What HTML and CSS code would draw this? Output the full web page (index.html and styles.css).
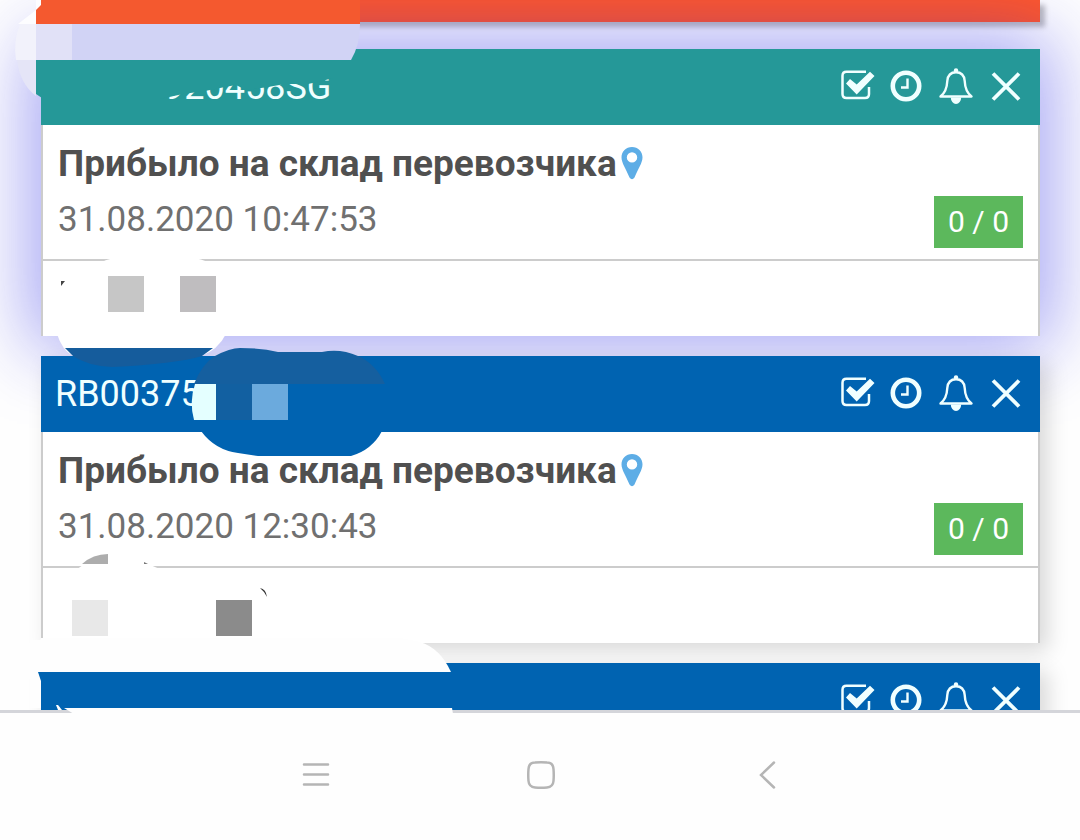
FILE: index.html
```html
<!DOCTYPE html>
<html lang="ru">
<head>
    <meta charset="UTF-8">
    <meta name="viewport" content="width=device-width, initial-scale=1">
    <title>Посылки</title>

    <link rel="stylesheet" href="styles.css">
</head>
<body>

<svg class="sprite" aria-hidden="true">
    <symbol id="check" viewBox="0 0 50 50">
        <path d="M35 9.8H15.5q-4 0-4 4V32q0 4 4 4H34q4 0 4-4V25" fill="none" stroke="currentColor" stroke-width="2.5"/>
        <path d="M15 21.5L19 17L25.7 22.5L39 9.7L43.5 14L25.7 32.5Z" fill="currentColor"/>
    </symbol>
    <symbol id="clock" viewBox="0 0 50 50">
        <circle cx="25" cy="24" r="13.2" fill="none" stroke="currentColor" stroke-width="4.6"/>
        <path d="M26.5 16.5V25.5H20" fill="none" stroke="currentColor" stroke-width="2.4"/>
    </symbol>
    <symbol id="bell" viewBox="0 0 50 50">
        <path d="M9.5 34.5C14.5 30.5 16 26 16.3 19C16.8 13.5 20 10.3 25 10.3S33.2 13.5 33.7 19C34 26 35.5 30.5 40.5 34.5Z" fill="none" stroke="currentColor" stroke-width="2.4" stroke-linejoin="round"/>
        <circle cx="25" cy="8.5" r="2.2" fill="currentColor"/>
        <path d="M19.8 35.5a5.2 6.5 0 0 0 10.4 0z" fill="currentColor"/>
    </symbol>
    <symbol id="close" viewBox="0 0 50 50">
        <path d="M12 11.5L38 37.5M38 11.5L12 37.5" fill="none" stroke="currentColor" stroke-width="3.8"/>
    </symbol>
    <symbol id="pin" viewBox="0 0 22 34">
        <path d="M11 1C5 1 .5 5.5.5 11.3C.5 17 5 23 8.5 31.5Q11 35 13.5 31.5C17 23 21.5 17 21.5 11.3C21.5 5.5 17 1 11 1ZM11 6.2a5.2 5.2 0 1 1 0 10.4a5.2 5.2 0 1 1 0-10.4Z" fill="currentColor" fill-rule="evenodd"/>
    </symbol>
</svg>

<main class="feed">

    <div class="card-tail"></div>

    <article class="card card-active">
        <header class="card-head teal">
            <h2 class="track track-short">920458SG</h2>
            <div class="actions">
                <button type="button" aria-label="Получено"><svg><use href="#check"/></svg></button>
                <button type="button" aria-label="История"><svg><use href="#clock"/></svg></button>
                <button type="button" aria-label="Уведомления"><svg><use href="#bell"/></svg></button>
                <button type="button" aria-label="Удалить"><svg><use href="#close"/></svg></button>
            </div>
        </header>
        <div class="card-body">
            <div class="status">
                <div>
                    <h3>Прибыло на склад перевозчика<svg class="pin"><use href="#pin"/></svg></h3>
                    <time datetime="2020-08-31T10:47:53">31.08.2020 10:47:53</time>
                </div>
                <span class="days">0 / 0</span>
            </div>
            <div class="note"></div>
        </div>
    </article>

    <article class="card">
        <header class="card-head blue">
            <h2 class="track">RB00375</h2>
            <div class="actions">
                <button type="button" aria-label="Получено"><svg><use href="#check"/></svg></button>
                <button type="button" aria-label="История"><svg><use href="#clock"/></svg></button>
                <button type="button" aria-label="Уведомления"><svg><use href="#bell"/></svg></button>
                <button type="button" aria-label="Удалить"><svg><use href="#close"/></svg></button>
            </div>
        </header>
        <div class="card-body">
            <div class="status">
                <div>
                    <h3>Прибыло на склад перевозчика<svg class="pin"><use href="#pin"/></svg></h3>
                    <time datetime="2020-08-31T12:30:43">31.08.2020 12:30:43</time>
                </div>
                <span class="days">0 / 0</span>
            </div>
            <div class="note"></div>
        </div>
    </article>

    <article class="card">
        <header class="card-head blue">
            <div class="actions">
                <button type="button" aria-label="Получено"><svg><use href="#check"/></svg></button>
                <button type="button" aria-label="История"><svg><use href="#clock"/></svg></button>
                <button type="button" aria-label="Уведомления"><svg><use href="#bell"/></svg></button>
                <button type="button" aria-label="Удалить"><svg><use href="#close"/></svg></button>
            </div>
        </header>
    </article>

</main>

<!-- brush strokes that hide the private numbers -->
<svg class="strokes" width="480" height="720" viewBox="0 0 480 720" aria-hidden="true">
    <!-- top card -->
    <path d="M41 0V5L36 10L18 24H36V0Z" fill="#fdfdff"/>
    <path d="M41 0V5L36 10V24H360V0Z" fill="#f4592f"/>
    <path d="M20 24Q13 42 16 60H36V24Z" fill="#f2f2fb"/>
    <path d="M36 24H72V60H36Z" fill="#e1e1f7"/>
    <path d="M72 24H360Q360 45 351 60H72Z" fill="#d1d3f5"/>
    <path d="M17 60Q20 84 36 96V60Z" fill="#e5e5f7"/>
    <path d="M36 60H42V98L36 94Z" fill="#259898"/>
    <path d="M160 70H333V78L322 81L308 84L285 84L268 87L246 90L236 85L225 87L205 91L183 94L160 99Z" fill="#259898"/>

    <!-- note of the active card -->
    <path d="M102 262Q115 255 155 255T210 263Z" fill="#fff"/>
    <path d="M61 281H65L61 286Z" fill="#444"/>
    <path d="M108 276h36v36h-36z" fill="#c6c6c6"/>
    <path d="M180 276h36v36h-36z" fill="#bfbdbf"/>
    <path d="M57 334Q62 350 73 356H201Q218 350 226 334Z" fill="#fff"/>
    <path d="M65 348L73 356Q88 366 112 367Q175 364 202 356L213 348Z" fill="#155c9c"/>

    <!-- number of the second card -->
    <path d="M194 384Q202 364 215 356Q230 348 240 348Q262 348 278 352H322Q340 348 358 356Q376 364 385 384Z" fill="#155f9f"/>
    <path d="M195 384H216V420H194Q189 402 195 384Z" fill="#e4ffff"/>
    <path d="M216 384h36v36h-36z" fill="#1260a1"/>
    <path d="M252 384h36v36h-36z" fill="#6baadd"/>
    <path d="M201 431Q215 450 238 453L258 456H351Q372 450 382 431Z" fill="#0063b1"/>

    <!-- note of the second card -->
    <path d="M76 570Q88 560 110 558T162 570Z" fill="#fff"/>
    <path d="M82 564Q93 554 108 554V564Z" fill="#adadad"/>
    <path d="M144 562L148 564H144Z" fill="#777"/>
    <path d="M260 588Q266 589 267 597Q265 592 260 588Z" fill="#333"/>
    <path d="M72 600h36v36h-36z" fill="#e8e8e8"/>
    <path d="M216 600h36v36h-36z" fill="#8b8b8b"/>
    <path d="M44 638H41L36 658V672H451Q440 648 420 642L400 638Z" fill="#fefefe"/>

    <!-- last card -->
    <path d="M30 640H41V708H30Z" fill="#fefefe"/>
    <path d="M38 672H42V684Z" fill="#0063b1"/>
    <path d="M56 705H58L62 710H58Z" fill="#fff"/>
    <path d="M64 708H452L453 714H74Z" fill="#fefefe"/>
</svg>

<nav class="system-bar">
    <button type="button" aria-label="Меню">
        <svg viewBox="0 0 40 40"><path d="M9 9.5H33M9 19.5H33M9 29.5H33"/></svg>
    </button>
    <button type="button" aria-label="Домой">
        <svg viewBox="0 0 40 40"><path d="M14 7.5Q20 7 26 7.5Q32 7.5 32.5 14Q33 20 32.5 26Q32 32 26 32.5Q20 33 14 32.5Q8 32 7.5 26Q7 20 7.5 14Q8 7.5 14 7.5Z"/></svg>
    </button>
    <button type="button" aria-label="Назад">
        <svg viewBox="0 0 40 40"><path d="M27 7.5L14 20L27 32.5"/></svg>
    </button>
</nav>

</body>
</html>
```
FILE: styles.css
```css
* {
    box-sizing: border-box;
    margin: 0;
    padding: 0;
}

body {
    display: flex;
    flex-direction: column;
    height: 100vh;
    position: relative;
    overflow: hidden;
    background: #fefefe;
    color: #505050;
    font-family: Roboto, "Liberation Sans", sans-serif;
}

button {
    border: 0;
    background: none;
    color: inherit;
    cursor: pointer;
}

.sprite {
    display: none;
}

.feed {
    flex: 1;
    min-height: 0;
    overflow: hidden;
    padding: 0 40px 0 41px;
}

.card-tail {
    height: 22px;
    margin-bottom: 27px;
    background: #ff572a;
    box-shadow: 5px 5px 5px rgba(0, 0, 0, 0.25);
}

.card {
    margin-bottom: 20px;
    box-shadow: 8px 8px 20px rgba(0, 0, 0, 0.15);
}

.card-active {
    box-shadow: 0 0 70px 12px rgba(30, 30, 230, 0.4);
}

.card-head {
    display: flex;
    align-items: center;
    height: 76px;
    padding: 0 9px 0 14px;
    color: #f0ffff;
}

.teal {
    background: #259898;
}

.blue {
    background: #0063b1;
}

.track {
    font-size: 36px;
    font-weight: 400;
}

.track-short {
    padding-left: 109px;
}

.actions {
    display: flex;
    margin-left: auto;
}

.actions button,
.actions svg {
    display: block;
    width: 50px;
    height: 50px;
}

.card-body {
    border: solid #ccc;
    border-width: 0 2px;
    background: #fff;
}

.status {
    display: flex;
    justify-content: space-between;
    align-items: flex-end;
    padding: 11px 15px;
    border-bottom: 2px solid #ccc;
}

.status h3 {
    font-size: 37px;
    font-weight: 700;
    line-height: 56px;
}

.status time {
    display: block;
    font-size: 35px;
    line-height: 56px;
    color: #707070;
}

.pin {
    display: inline-block;
    width: 22px;
    height: 34px;
    margin-left: 4px;
    vertical-align: -4px;
    color: #5dade6;
}

.days {
    padding: 0 14px;
    background: #5cb85c;
    color: #fff;
    font-size: 30px;
    line-height: 52px;
}

.note {
    height: 75px;
}

.strokes {
    position: absolute;
    top: 0;
    left: 0;
    z-index: 1;
    pointer-events: none;
}

.system-bar {
    display: flex;
    justify-content: center;
    align-items: center;
    gap: 186px;
    height: 130px;
    padding: 0 0 3px 2px;
    border-top: 3px solid #d4d5da;
    background: #fefefe;
}

.system-bar button,
.system-bar svg {
    display: block;
    width: 40px;
    height: 40px;
}

.system-bar path {
    fill: none;
    stroke: #b5b5b5;
    stroke-width: 2.5px;
    stroke-linecap: round;
}
```
